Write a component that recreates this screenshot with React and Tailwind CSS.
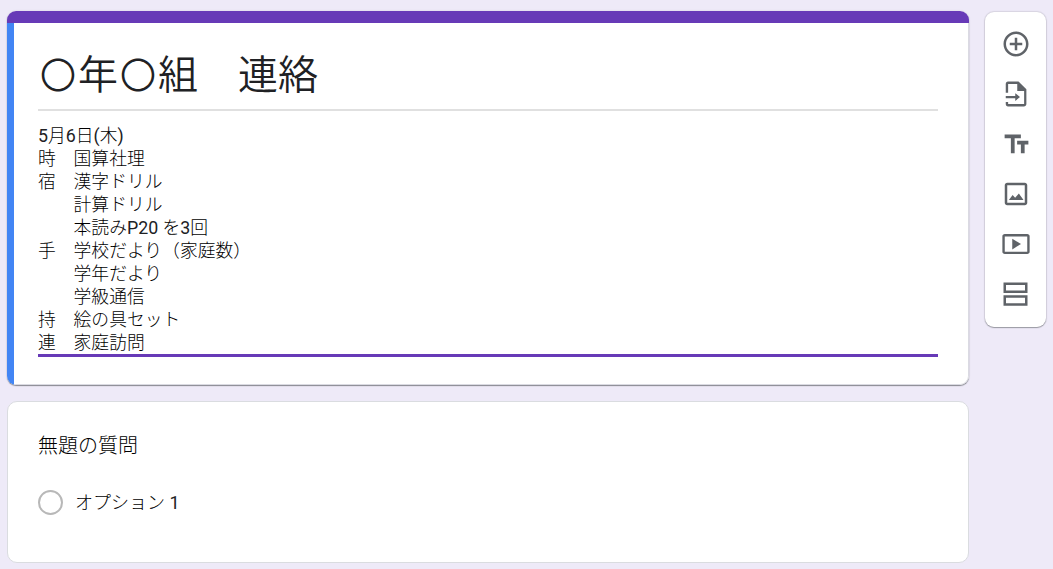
import React from "react";

const lines = [
  "5月6日(木)",
  "時　国算社理",
  "宿　漢字ドリル",
  "　　計算ドリル",
  "　　本読みP20 を3回",
  "手　学校だより（家庭数）",
  "　　学年だより",
  "　　学級通信",
  "持　絵の具セット",
  "連　家庭訪問",
];

// Huruf latin dan angka sedikit lebih tebal dari kanji
const MixedText = ({ text }) =>
  text.split(/([A-Za-z0-9()]+)/).map((part, index) =>
    index % 2 === 1 ? (
      <span key={index} className="font-normal text-[#202124]">
        {part}
      </span>
    ) : (
      part
    )
  );

const Circle = () => (
  <span className="inline-block w-10 text-center text-[36px] leading-none">〇</span>
);

const Icon = ({ children }) => (
  <svg viewBox="0 0 24 24" className="w-[30px] h-[30px]" fill="currentColor">
    {children}
  </svg>
);

const Toolbar = () => (
  <div className="mt-3 ml-4 flex h-[315px] w-[61px] flex-col items-center gap-5 rounded-[9px] bg-white pt-[17px] text-[#5f6368] shadow-[0_1px_1px_rgba(60,64,67,0.4),0_0_1px_1px_rgba(60,64,67,0.13)]">
    {/* Tambah pertanyaan */}
    <Icon>
      <path d="M13 7h-2v4H7v2h4v4h2v-4h4v-2h-4V7zm-1-5C6.48 2 2 6.48 2 12s4.48 10 10 10 10-4.48 10-10S17.52 2 12 2zm0 18c-4.41 0-8-3.59-8-8s3.59-8 8-8 8 3.59 8 8-3.59 8-8 8z" />
    </Icon>
    {/* Impor pertanyaan */}
    <Icon>
      <path d="M14 2H5.600c-1.100 0-1.800.9-1.800 2v7h1.900V4h7.300v5.500h5.500V20H5.700v-1.600H3.800V20c0 1.100.7 2 1.800 2h12.700c1.100 0 2-.9 2-2V8.200z" />
      <path d="M3.800 13.500h7.600V11.300l3.800 3.100-3.800 3.100v-2.200H3.800z" />
    </Icon>
    {/* Judul dan deskripsi */}
    <Icon>
      <path d="M2.900 4.300v3h5v12h3v-12h5v-3h-13zm19 5h-9v3h3v7h3v-7h3v-3z" />
    </Icon>
    {/* Gambar */}
    <Icon>
      <path d="M19 5v14H5V5h14m0-2H5c-1.100 0-2 .9-2 2v14c0 1.100.9 2 2 2h14c1.100 0 2-.9 2-2V5c0-1.100-.9-2-2-2z" />
      <path d="M6.300 16.800l3-4.100 2 2.300 3-3.500 3.700 5.300z" />
    </Icon>
    {/* Video */}
    <Icon>
      <path d="M21 4H3c-1.100 0-1.900.8-1.900 1.800v12.400c0 1 .8 1.800 1.900 1.800h18c1.100 0 1.900-.8 1.900-1.800V5.800C22.900 4.800 22.100 4 21 4zm0 14.100H3V5.900h18v12.200z" />
      <path d="M9 7.700v8.600l7-4.300z" />
    </Icon>
    {/* Bagian */}
    <Icon>
      <path d="M2 2.800h19.200v8.300H2zm2 2v4.300h15.200V4.800zM2 13h19.200v8.300H2zm2 2v4.300h15.200V15z" fillRule="evenodd" />
    </Icon>
  </div>
);

const App = () => {
  return (
    <div className="flex h-[569px] w-[1053px] overflow-hidden bg-[#eeeaf8] pl-[7px] font-light text-[#202124] font-[Roboto,'Noto_Sans_CJK_JP',sans-serif]">
      <div className="w-[962px] shrink-0 pt-[11px]">
        <div className="h-[374px] overflow-hidden rounded-[9px] bg-white shadow-[0_1px_1px_rgba(60,64,67,0.55),0_0_2px_rgba(60,64,67,0.15)]">
          <div className="h-3 bg-[#673ab7]" />
          <div className="flex h-[362px]">
            <div className="w-[7px] bg-[#4285f4]" />
            <div className="flex-1 rounded-br-[9px] border-r border-b border-[#dadae2] pt-[27px] pr-[30px] pl-6">
              <h1 className="h-[61px] border-b-2 border-[#e0e0e0] text-[40px] leading-[52px] font-[350] whitespace-pre">
                <Circle />年<Circle />組　連絡
              </h1>
              <div className="mt-[13px] border-b-3 border-[#673ab7] text-[17.8px] leading-[23px] text-black">
                {lines.map((line, index) => (
                  <p key={index} className="whitespace-pre">
                    <MixedText text={line} />
                  </p>
                ))}
              </div>
            </div>
          </div>
        </div>

        <div className="mt-4 h-[162px] rounded-[10px] border border-[#dadce0] bg-white pt-[29px] pl-[30px] text-black">
          <h2 className="text-[20px] leading-[30px]">無題の質問</h2>
          <div className="mt-[29px] flex items-center gap-3">
            <span className="h-[25px] w-[25px] rounded-full border-2 border-[#b8b8b8]" />
            <span className="text-[18px] leading-6">
              <MixedText text="オプション 1" />
            </span>
          </div>
        </div>
      </div>
      <Toolbar />
    </div>
  );
};

export default App;
